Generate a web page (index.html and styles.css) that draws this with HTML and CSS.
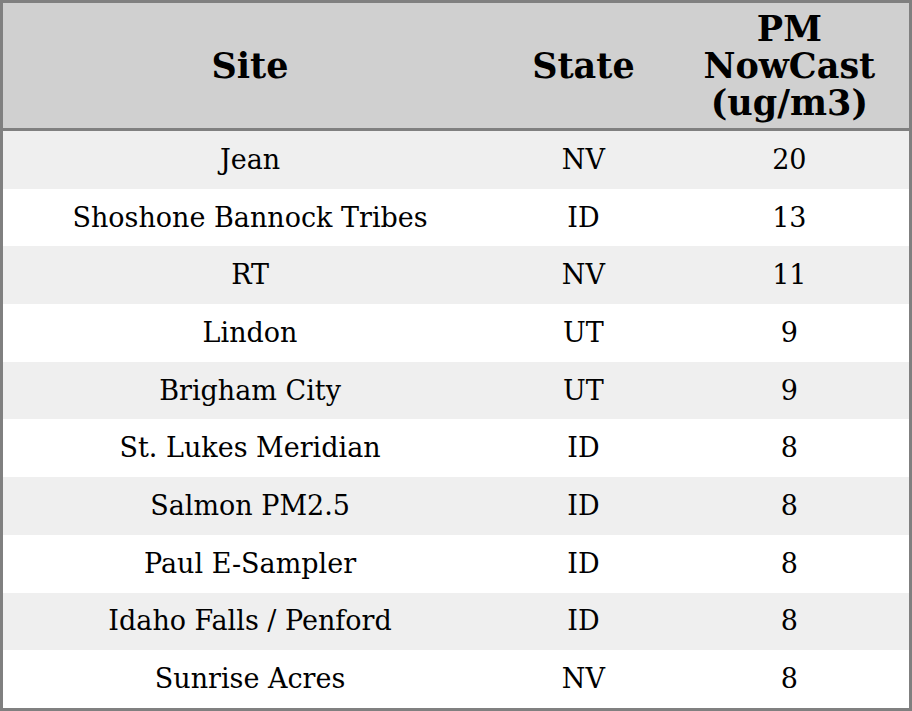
FILE: index.html
```html
<!DOCTYPE html>
<html>
<head>
<meta charset="utf-8">
<link rel="stylesheet" href="styles.css">
</head>
<body>
<table class="pm-table">
  <thead>
    <tr>
      <th class="col-site">Site</th>
      <th class="col-state">State</th>
      <th class="col-pm">PM<br>NowCast<br>(ug/m3)</th>
    </tr>
  </thead>
  <tbody>
    <tr><td>Jean</td><td>NV</td><td>20</td></tr>
    <tr><td>Shoshone Bannock Tribes</td><td>ID</td><td>13</td></tr>
    <tr><td>RT</td><td>NV</td><td>11</td></tr>
    <tr><td>Lindon</td><td>UT</td><td>9</td></tr>
    <tr><td>Brigham City</td><td>UT</td><td>9</td></tr>
    <tr><td>St. Lukes Meridian</td><td>ID</td><td>8</td></tr>
    <tr><td>Salmon PM2.5</td><td>ID</td><td>8</td></tr>
    <tr><td>Paul E-Sampler</td><td>ID</td><td>8</td></tr>
    <tr><td>Idaho Falls / Penford</td><td>ID</td><td>8</td></tr>
    <tr><td>Sunrise Acres</td><td>NV</td><td>8</td></tr>
  </tbody>
</table>
</body>
</html>
```
FILE: styles.css
```css
html, body {
  margin: 0;
  padding: 0;
  background: #ffffff;
}
.pm-table {
  width: 912px;
  height: 711px;
  border-collapse: collapse;
  border: 3px solid #808080;
  font-family: "DejaVu Serif", serif;
  color: #000;
}
.pm-table th {
  background: #d0d0d0;
  font-size: 35px;
  font-weight: bold;
  line-height: 37px;
  padding: 7px 0;
  height: 125px;
  box-sizing: border-box;
  border-bottom: 3px solid #808080;
  text-align: center;
  vertical-align: middle;
}
.col-site { width: 494px; }
.col-state { width: 172px; }
.col-pm { width: 240px; }
.pm-table td {
  font-size: 27px;
  line-height: 30px;
  padding: 0;
  height: 57.7px;
  text-align: center;
  vertical-align: middle;
}
.pm-table tbody tr:nth-child(odd) td {
  background: #efefef;
}
.pm-table tbody tr:nth-child(even) td {
  background: #ffffff;
}
```
